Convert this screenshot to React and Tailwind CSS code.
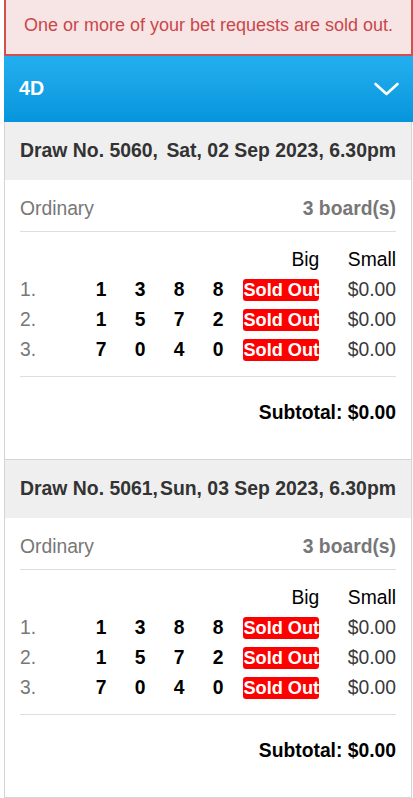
import React from 'react';

const draws = [
  { no: '5060', date: 'Sat, 02 Sep 2023, 6.30pm' },
  { no: '5061', date: 'Sun, 03 Sep 2023, 6.30pm' },
];

const bets = [
  { n: 1, digits: ['1', '3', '8', '8'] },
  { n: 2, digits: ['1', '5', '7', '2'] },
  { n: 3, digits: ['7', '0', '4', '0'] },
];

function DrawCard({ draw }) {
  return (
    <div>
      {/* draw header */}
      <div className="h-[58px] bg-[#efefef] px-[15px] flex items-center justify-between whitespace-nowrap text-[19.4px] font-bold text-[#333]">
        <span className="shrink-0">Draw No. {draw.no},</span>
        <span className="shrink-0">{draw.date}</span>
      </div>

      <div className="bg-white px-[15px] pt-[18px] pb-[31px] border-b border-[#d4d4d4]">
        <div className="h-[22px] flex items-center justify-between text-[19.3px] text-[#777]">
          <span>Ordinary</span>
          <span className="font-bold">3 board(s)</span>
        </div>
        <div className="mt-[11px] border-b border-[#ddd]" />

        <div className="mt-[13px]">
          <div className="h-[30px] flex items-center text-[19.3px] text-black">
            <div className="w-[61.5px]" />
            <div className="w-[156px]" />
            <div className="ml-[5.8px] w-[76px] text-right">Big</div>
            <div className="flex-1 text-right">Small</div>
          </div>
          {bets.map(b => (
            <div key={b.n} className="h-[30px] flex items-center text-[19.3px]">
              <div className="w-[61.5px] text-[#777]">{b.n}.</div>
              {b.digits.map((d, i) => (
                <div key={i} className="w-[39px] text-center font-bold text-black">{d}</div>
              ))}
              <div className="ml-[5.8px] w-[76px] h-[22px] rounded-[3px] bg-[#ff0000] text-white font-bold text-[18.2px] leading-[22px] text-center whitespace-nowrap overflow-hidden">
                Sold Out
              </div>
              <div className="flex-1 text-right text-[#3a3a3a]">$0.00</div>
            </div>
          ))}
        </div>
        <div className="mt-[11px] border-b border-[#ddd]" />

        <div className="mt-[21px] h-[30px] flex items-center justify-end text-[19.3px] font-bold text-black">
          Subtotal: $0.00
        </div>
      </div>
    </div>
  );
}

export default function App() {
  return (
    <div className="min-h-[798px] bg-white pl-[4px] overflow-hidden" style={{ fontFamily: '"Liberation Sans", Arial, sans-serif' }}>
      {/* alert */}
      <div className="h-[56px] w-[409px] border-2 border-t-0 border-[#d24f4f] bg-[#f7e4e4] flex items-center justify-center pb-[4px] text-[18px] text-[#c9474b]">
        One or more of your bet requests are sold out.
      </div>

      {/* product header */}
      <div className="h-[66px] w-[409px] bg-gradient-to-b from-[#23afef] to-[#0595dc] flex items-center justify-between pl-[15px] pr-[14px]">
        <span className="text-white font-bold text-[19.6px]">4D</span>
        <svg width="25" height="14" viewBox="0 0 25 14" fill="none">
          <polyline points="1.5,2 12.5,12 23.5,2" stroke="white" strokeWidth="2.6" strokeLinecap="round" strokeLinejoin="round" />
        </svg>
      </div>

      <div className="w-[408px] border-x border-[#d4d4d4]">
        {draws.map(d => (
          <DrawCard key={d.no} draw={d} />
        ))}
      </div>
    </div>
  );
}
